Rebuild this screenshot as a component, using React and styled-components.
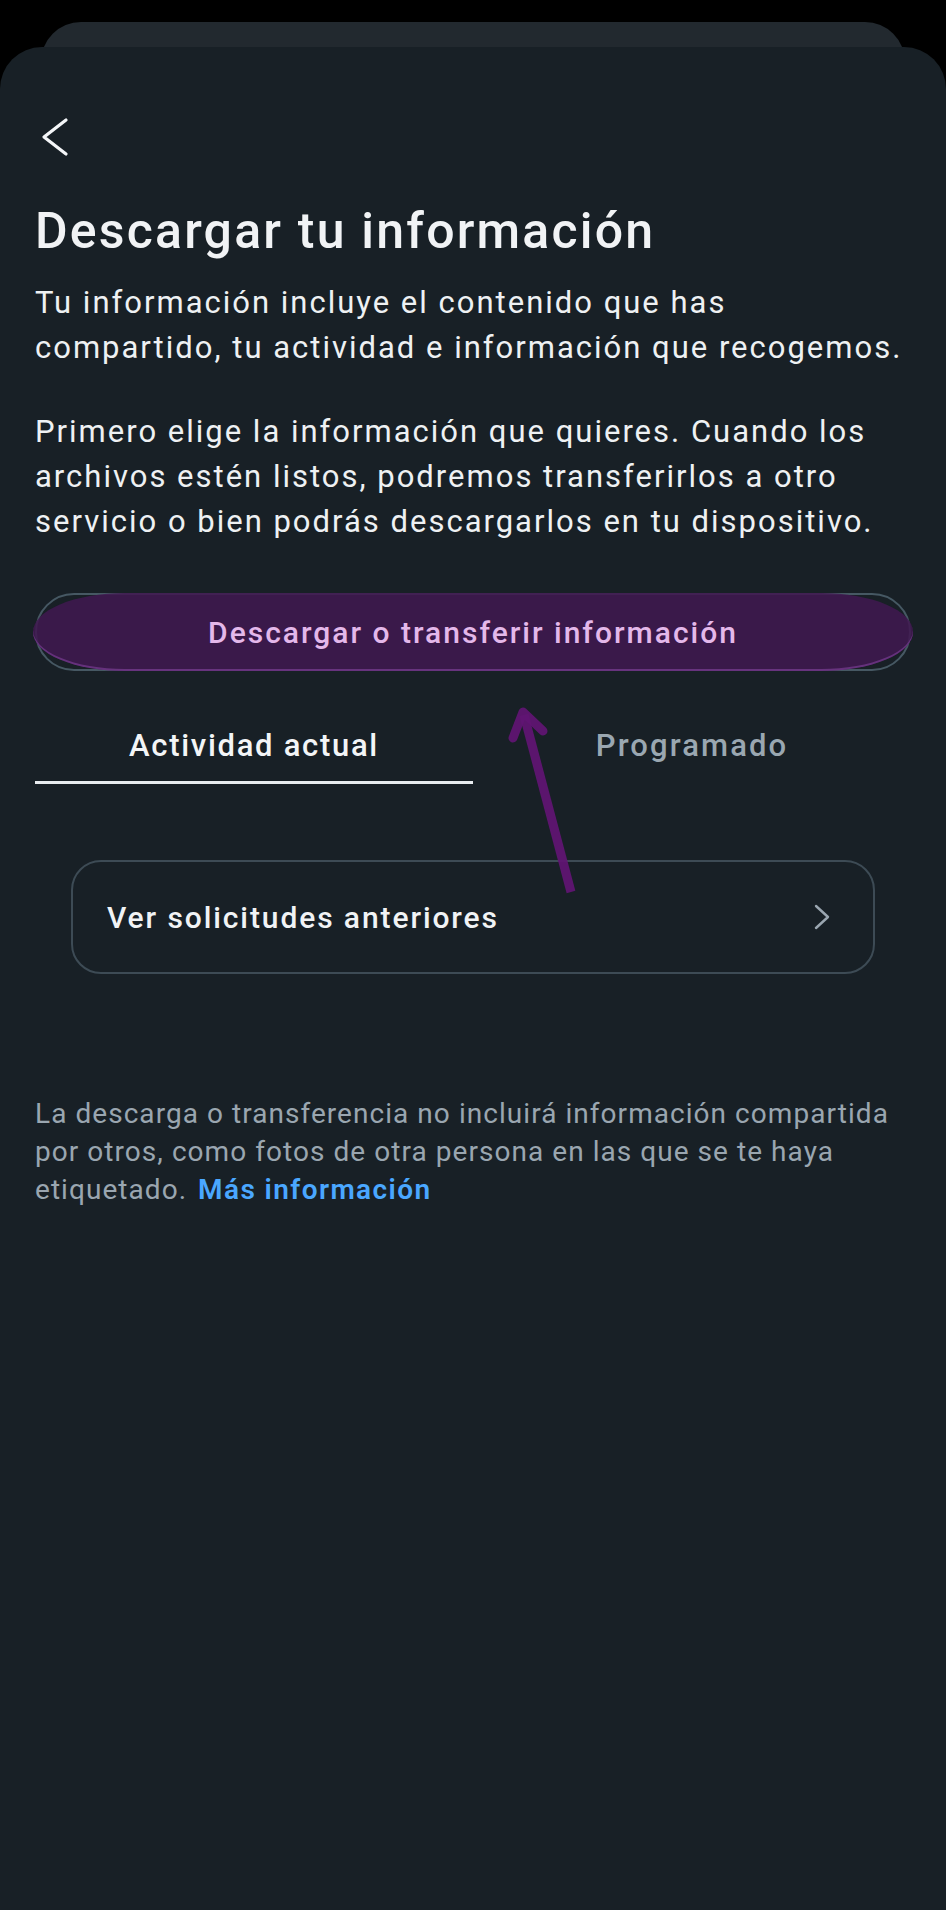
import React from 'react';
import styled, { createGlobalStyle } from 'styled-components';

const GlobalStyle = createGlobalStyle`
  html, body {
    margin: 0;
    padding: 0;
    background: #000;
  }
  body {
    font-family: Roboto, "Noto Sans", sans-serif;
    -webkit-font-smoothing: antialiased;
  }
`;

const App = () => {
  return (
    <>
      <GlobalStyle />
      <Page>
        <BackSheet />
        <Sheet>
          <BackButton aria-label="Atrás">
            <svg width="40" height="40" viewBox="0 0 40 40">
              <polyline
                points="31,3 9,20 31,37"
                fill="none"
                stroke="#f4f6f8"
                strokeWidth="3.2"
                strokeLinecap="round"
                strokeLinejoin="round"
              />
            </svg>
          </BackButton>

          <Title>Descargar tu información</Title>
          <Paragraph>
            Tu información incluye el contenido que has
            <br />
            compartido, tu actividad e información que recogemos.
          </Paragraph>
          <Paragraph spaced>
            Primero elige la información que quieres. Cuando los
            <br />
            archivos estén listos, podremos transferirlos a otro
            <br />
            servicio o bien podrás descargarlos en tu dispositivo.
          </Paragraph>

          <PrimaryButton>
            <span>Descargar o transferir información</span>
          </PrimaryButton>

          <Tabs>
            <Tab active>Actividad actual</Tab>
            <Tab>Programado</Tab>
          </Tabs>

          <RowCard>
            <span>Ver solicitudes anteriores</span>
            <svg width="16" height="26" viewBox="0 0 16 26">
              <polyline
                points="2,2 14,13 2,24"
                fill="none"
                stroke="#9aa6b0"
                strokeWidth="2.4"
                strokeLinecap="round"
                strokeLinejoin="round"
              />
            </svg>
          </RowCard>

          <Footnote>
            La descarga o transferencia no incluirá información compartida
            <br />
            por otros, como fotos de otra persona en las que se te haya
            <br />
            etiquetado. <Link>Más información</Link>
          </Footnote>

          <Arrow width="110" height="260" viewBox="0 0 110 260">
            <line
              x1="81"
              y1="195"
              x2="34"
              y2="18"
              stroke="rgba(97, 20, 115, 0.93)"
              strokeWidth="9"
            />
            <polyline
              points="23,41 33,15 53,34"
              fill="none"
              stroke="rgba(97, 20, 115, 0.93)"
              strokeWidth="9"
              strokeLinecap="round"
              strokeLinejoin="round"
            />
          </Arrow>
        </Sheet>
      </Page>
    </>
  );
};

export default App;

const Page = styled.div`
  width: 946px;
  min-height: 1910px;
  padding-top: 22px;
  box-sizing: border-box;
  overflow: hidden;
  background: #000;
`;

const BackSheet = styled.div`
  height: 50px;
  margin: 0 41px;
  border-radius: 40px 40px 0 0;
  background: #22292f;
`;

const Sheet = styled.div`
  position: relative;
  margin-top: -25px;
  min-height: 1863px;
  padding: 70px 35px 0;
  box-sizing: border-box;
  border-radius: 42px 42px 0 0;
  background: #182026;
`;

const BackButton = styled.div`
  width: 40px;
  height: 40px;
  svg {
    display: block;
  }
`;

const Title = styled.h1`
  margin: 44px 0 0;
  font-size: 50px;
  line-height: 60px;
  font-weight: 500;
  letter-spacing: 2.2px;
  color: #f1f3f5;
`;

const Paragraph = styled.p`
  margin: ${(props) => (props.spaced ? '39px' : '19px')} 0 0;
  font-size: 31px;
  line-height: 45px;
  font-weight: 400;
  letter-spacing: 2px;
  color: #eef1f3;
  white-space: nowrap;
`;

const PrimaryButton = styled.div`
  position: relative;
  margin-top: 49px;
  height: 78px;
  box-sizing: border-box;
  border: 2px solid #465863;
  border-radius: 39px;
  display: flex;
  align-items: center;
  justify-content: center;
  font-size: 30px;
  font-weight: 500;
  letter-spacing: 2px;
  color: #e4b8ea;
  &::before {
    content: '';
    position: absolute;
    top: -2px;
    bottom: -2px;
    left: -4px;
    right: -4px;
    border-radius: 92px / 39px;
    background: rgba(64, 24, 80, 0.86);
    box-shadow: inset 0 -2px 0 rgba(120, 60, 145, 0.7);
  }
  span {
    position: relative;
  }
`;

const Tabs = styled.div`
  display: grid;
  grid-template-columns: 1fr 1fr;
  margin-top: 52px;
`;

const Tab = styled.div`
  text-align: center;
  font-size: 31px;
  line-height: 45px;
  font-weight: 500;
  letter-spacing: ${(props) => (props.active ? '1.7px' : '2.1px')};
  color: ${(props) => (props.active ? '#f3f5f7' : '#9aa7b1')};
  padding-bottom: 13px;
  border-bottom: 3px solid ${(props) => (props.active ? '#e8ecef' : 'transparent')};
`;

const RowCard = styled.div`
  margin: 76px 36px 0;
  height: 114px;
  box-sizing: border-box;
  border: 2px solid #3d4b55;
  border-radius: 30px;
  display: flex;
  align-items: center;
  justify-content: space-between;
  padding: 0 43px 0 34px;
  font-size: 30px;
  font-weight: 500;
  letter-spacing: 1.9px;
  color: #f1f3f5;
  svg {
    display: block;
  }
`;

const Footnote = styled.p`
  margin: 121px 0 0;
  font-size: 28px;
  line-height: 38px;
  letter-spacing: 1.05px;
  color: #9aa6b0;
  white-space: nowrap;
`;

const Link = styled.span`
  margin-left: 3px;
  color: #4aa7ff;
  font-weight: 600;
  letter-spacing: 1.4px;
`;

const Arrow = styled.svg`
  position: absolute;
  left: 490px;
  top: 650px;
  pointer-events: none;
`;
